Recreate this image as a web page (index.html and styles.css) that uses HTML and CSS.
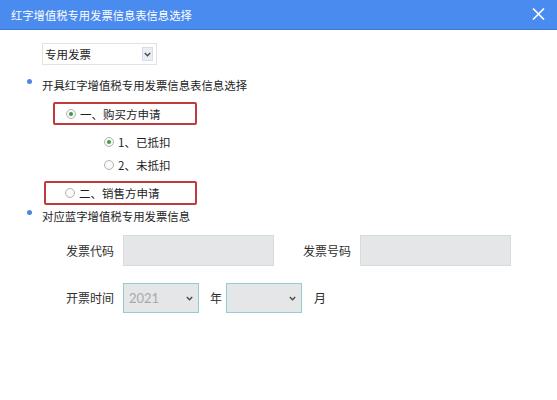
FILE: index.html
```html
<!DOCTYPE html>
<html lang="zh-CN">
<head>
<meta charset="utf-8">
<title>红字增值税专用发票信息表信息选择</title>
<link rel="stylesheet" href="styles.css">
</head>
<body>
<div class="dialog">
  <header class="titlebar">
    <span class="title">红字增值税专用发票信息表信息选择</span>
    <svg class="close" width="13" height="12" viewBox="0 0 13 12"><path d="M1 0.5 L12 11.5 M12 0.5 L1 11.5" stroke="#ffffff" stroke-width="1.6" fill="none"/></svg>
  </header>
  <div class="content">
    <div class="type-select">
      <span class="type-value">专用发票</span>
      <span class="type-arrow"><svg width="7" height="5" viewBox="0 0 7 5"><path d="M0.8 1 L3.5 3.8 L6.2 1" stroke="#4a4a4a" stroke-width="1.4" fill="none"/></svg></span>
    </div>

    <div class="bullet-row first">
      <span class="dot"></span>
      <span class="bullet-text">开具红字增值税专用发票信息表信息选择</span>
    </div>

    <div class="opt-box box-buyer">
      <span class="radio checked"></span>
      <span class="opt-text">一、购买方申请</span>
    </div>

    <div class="sub-options">
      <div class="sub-row"><span class="radio checked"></span><span class="opt-text">1、已抵扣</span></div>
      <div class="sub-row"><span class="radio"></span><span class="opt-text">2、未抵扣</span></div>
    </div>

    <div class="opt-box box-seller">
      <span class="radio"></span>
      <span class="opt-text">二、销售方申请</span>
    </div>

    <div class="bullet-row second">
      <span class="dot"></span>
      <span class="bullet-text">对应蓝字增值税专用发票信息</span>
    </div>

    <div class="field-row row-code">
      <span class="label">发票代码</span>
      <span class="input"></span>
      <span class="label label-gap">发票号码</span>
      <span class="input"></span>
    </div>

    <div class="field-row row-date">
      <span class="label">开票时间</span>
      <span class="select">
        <span class="select-value">2021</span>
        <svg width="7" height="5" viewBox="0 0 7 5"><path d="M0.8 1 L3.5 3.8 L6.2 1" stroke="#4a4a4a" stroke-width="1.4" fill="none"/></svg>
      </span>
      <span class="unit">年</span>
      <span class="select">
        <span class="select-value"></span>
        <svg width="7" height="5" viewBox="0 0 7 5"><path d="M0.8 1 L3.5 3.8 L6.2 1" stroke="#4a4a4a" stroke-width="1.4" fill="none"/></svg>
      </span>
      <span class="unit">月</span>
    </div>
  </div>
</div>
</body>
</html>
```

FILE: styles.css
```css
html, body {
  margin: 0;
  padding: 0;
  background: #ffffff;
}

body {
  font-family: "Noto Sans CJK SC", "Noto Sans", sans-serif;
  color: #222222;
  width: 557px;
  height: 400px;
  overflow: hidden;
}

.dialog {
  width: 557px;
}

.titlebar {
  height: 29px;
  background: #4a8bf0;
  border-bottom: 1px solid #3d78d6;
  display: flex;
  align-items: center;
  justify-content: space-between;
  padding: 0 12px 0 11px;
}

.title {
  color: #ffffff;
  font-size: 11.3px;
  line-height: 14px;
}

.close {
  display: block;
  margin-top: -1px;
}

.content {
  padding-top: 13px;
}

.type-select {
  margin-left: 42px;
  width: 111px;
  height: 20px;
  border: 1px solid #e2e2e2;
  display: flex;
  align-items: center;
  justify-content: space-between;
  padding-left: 2px;
  box-sizing: content-box;
}

.type-value {
  font-size: 11.5px;
  line-height: 16px;
  color: #1e1e1e;
}

.type-arrow {
  width: 11px;
  height: 14px;
  margin-right: 3px;
  background: #e9eef6;
  border: 1px solid #d6dde8;
  display: flex;
  align-items: center;
  justify-content: center;
  box-sizing: border-box;
}

.bullet-row {
  display: flex;
  align-items: flex-start;
  height: 16px;
}

.bullet-row.first {
  margin-top: 12px;
}

.bullet-row.second {
  margin-top: 3px;
}

.dot {
  width: 5px;
  height: 5px;
  border-radius: 50%;
  background: #4f86e0;
  margin-left: 27px;
  margin-top: 2px;
  margin-right: 10px;
}

.bullet-text {
  font-size: 11.4px;
  line-height: 16px;
  color: #1e1e1e;
}

.opt-box {
  border: 2px solid #c0393b;
  border-radius: 2px;
  height: 19px;
  display: flex;
  align-items: center;
  box-sizing: content-box;
}

.box-buyer {
  margin-top: 9px;
  margin-left: 53px;
  width: 140px;
}

.box-buyer .radio {
  margin-left: 11px;
}

.box-seller {
  margin-top: 5px;
  margin-left: 44px;
  width: 149px;
  height: 20px;
}

.box-seller .radio {
  margin-left: 19px;
}

.radio {
  width: 10px;
  height: 10px;
  border-radius: 50%;
  border: 1px solid #b4b4b4;
  background: radial-gradient(circle at 50% 40%, #ffffff 0%, #f1f1f1 100%);
  box-sizing: border-box;
  margin-right: 4px;
  display: flex;
  align-items: center;
  justify-content: center;
  flex: none;
}

.radio.checked::after {
  content: "";
  width: 4px;
  height: 4px;
  border-radius: 50%;
  background: #3f9a3f;
}

.opt-text {
  font-size: 11.5px;
  line-height: 16px;
  color: #1e1e1e;
}

.sub-options {
  margin-top: 5px;
  padding-left: 104px;
}

.sub-row {
  height: 23px;
  display: flex;
  align-items: center;
}

.field-row {
  display: flex;
  align-items: center;
  padding-left: 66px;
}

.row-code {
  margin-top: 11px;
  height: 31px;
}

.row-date {
  margin-top: 17px;
  height: 30px;
}

.label {
  font-size: 12px;
  line-height: 16px;
  color: #2e2e2e;
  width: 48px;
  margin-right: 9px;
}

.label-gap {
  margin-left: 29px;
}

.input {
  width: 151px;
  height: 31px;
  background: #e4e6e8;
  border: 1px solid #d3dde0;
  box-sizing: border-box;
}

.select {
  width: 76px;
  height: 30px;
  background: #e4e6e8;
  border: 1px solid #94ccd2;
  box-sizing: border-box;
  display: flex;
  align-items: center;
  justify-content: space-between;
  padding: 0 5px 0 5px;
}

.select-value {
  font-family: "Lato", "Noto Sans", sans-serif;
  font-size: 13px;
  color: #a9a9a9;
}

.unit {
  font-size: 12px;
  line-height: 16px;
  color: #2e2e2e;
  margin: 0 4px 0 11px;
}

.row-date .unit:last-child {
  margin-left: 12px;
}
```
